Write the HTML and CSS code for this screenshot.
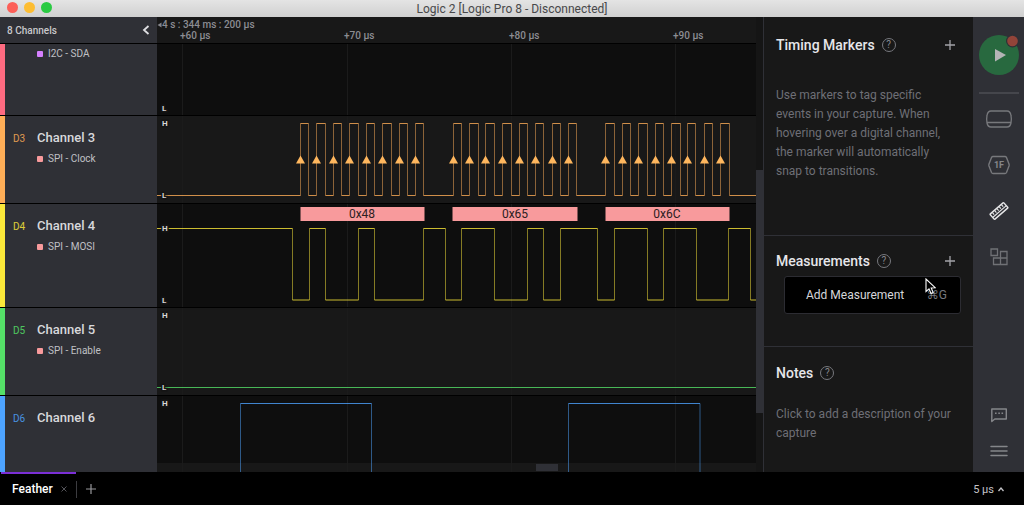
FILE: index.html
```html
<!DOCTYPE html>
<html lang="en">
<head>
<meta charset="utf-8">
<title>Logic 2</title>
<link rel="stylesheet" href="styles.css">
</head>
<body>
<div class="app">
  <header class="titlebar">
    <div class="lights"><i class="light red"></i><i class="light amber"></i><i class="light green"></i></div>
    <div class="title">Logic 2 [Logic Pro 8 - Disconnected]</div>
  </header>

  <main class="workspace">
    <section class="capture">
      <div class="rows">
        <div class="row ruler">
          <div class="channels-head">
            <span>8 Channels</span>
            <button class="icon-btn" aria-label="Collapse channels"><svg width="8" height="10" viewBox="0 0 8 10"><path d="M6.5 1L2 5l4.5 4" fill="none" stroke="#dedee2" stroke-width="1.8"/></svg></button>
          </div>
          <svg class="plot">
            <path d="M4.500 5.500v5l-4-2.500z" fill="#85868c"/>
            <text class="tick" x="5" y="11">4 s : 344 ms : 200 µs</text>
            <text class="tick" x="23" y="22">+60 µs</text>
            <text class="tick" x="187" y="22">+70 µs</text>
            <text class="tick" x="352" y="22">+80 µs</text>
            <text class="tick" x="516" y="22">+90 µs</text>
          </svg>
        </div>

        <div class="row d2 short">
          <div class="channel">
            <div class="analyzer"><i class="swatch violet"></i>I2C - SDA</div>
          </div>
          <svg class="plot">
            <path class="grid" d="M25.500 0v72M190.500 0v72M354.500 0v72M518.500 0v72"/>
            <text class="level" x="5" y="67">L</text>
          </svg>
        </div>

        <div class="row d3 alt">
          <div class="channel">
            <div class="name"><span class="id">D3</span>Channel 3</div>
            <div class="analyzer"><i class="swatch"></i>SPI - Clock</div>
          </div>
          <svg class="plot" id="clock">
            <path class="grid" d="M25.500 0v88M190.500 0v88M354.500 0v88M518.500 0v88"/>
            <path class="edges"/><path class="levels"/>
            <path class="arrows"/>
            <text class="level" x="5" y="10">H</text>
            <text class="level" x="5" y="82">L</text>
          </svg>
        </div>

        <div class="row d4 tall">
          <div class="channel">
            <div class="name"><span class="id">D4</span>Channel 4</div>
            <div class="analyzer"><i class="swatch"></i>SPI - MOSI</div>
          </div>
          <svg class="plot" id="mosi">
            <path class="grid" d="M25.500 0v104M190.500 0v104M354.500 0v104M518.500 0v104"/>
            <rect class="bubble" x="143.500" y="3" width="124" height="14"/>
            <rect class="bubble" x="295.500" y="3" width="125" height="14"/>
            <rect class="bubble" x="448.500" y="3" width="124" height="14"/>
            <text class="byte" x="205" y="14">0x48</text>
            <text class="byte" x="358" y="14">0x65</text>
            <text class="byte" x="510" y="14">0x6C</text>
            <path class="edges"/><path class="levels"/>
            <text class="level" x="5" y="27">H</text>
            <text class="level" x="5" y="99">L</text>
          </svg>
        </div>

        <div class="row d5 alt">
          <div class="channel">
            <div class="name"><span class="id">D5</span>Channel 5</div>
            <div class="analyzer"><i class="swatch"></i>SPI - Enable</div>
          </div>
          <svg class="plot" id="enable">
            <path class="grid" d="M25.500 0v88M190.500 0v88M354.500 0v88M518.500 0v88"/>
            <path class="edges"/><path class="levels"/>
            <text class="level" x="5" y="10">H</text>
            <text class="level" x="5" y="82">L</text>
          </svg>
        </div>

        <div class="row d6 last">
          <div class="channel">
            <div class="name"><span class="id">D6</span>Channel 6</div>
          </div>
          <div class="plot-wrap">
            <div class="hscroll"><i class="hthumb"></i></div>
            <svg class="plot" id="ch6">
              <path class="grid" d="M25.500 0v104M190.500 0v104M354.500 0v104M518.500 0v104"/>
              <path class="edges"/><path class="levels"/>
              <text class="level" x="5" y="10">H</text>
            </svg>
          </div>
        </div>
      </div>
      <div class="vscroll"><i class="vthumb"></i></div>
    </section>

    <aside class="panel">
      <section class="block">
        <div class="block-head">
          <h2>Timing Markers</h2>
          <button class="icon-btn help" aria-label="Help">?</button>
          <button class="icon-btn add" aria-label="Add timing marker"><svg width="10" height="10" viewBox="0 0 10 10"><path d="M5 0v10M0 5h10" stroke="#a3a3a8" stroke-width="1.300"/></svg></button>
        </div>
        <p>Use markers to tag specific events in your capture. When hovering over a digital channel, the marker will automatically snap to transitions.</p>
      </section>
      <section class="block">
        <div class="block-head">
          <h2>Measurements</h2>
          <button class="icon-btn help" aria-label="Help">?</button>
          <button class="icon-btn add" aria-label="Add measurement"><svg width="10" height="10" viewBox="0 0 10 10"><path d="M5 0v10M0 5h10" stroke="#a3a3a8" stroke-width="1.300"/></svg></button>
        </div>
        <button class="menu"><span>Add Measurement</span><kbd>⌘G</kbd></button>
        <svg class="cursor" width="11" height="17" viewBox="0 0 11 17"><path d="M1 1v12.500l3-2.700 2 4.700 2.200-1-2-4.500 4-.3z" fill="#000" stroke="#fff" stroke-width="1.100"/></svg>
      </section>
      <section class="block">
        <div class="block-head">
          <h2>Notes</h2>
          <button class="icon-btn help" aria-label="Help">?</button>
        </div>
        <p>Click to add a description of your capture</p>
      </section>
    </aside>

    <nav class="toolbar">
      <button class="icon-btn" aria-label="Start capture"><svg width="42" height="42" viewBox="0 0 42 42"><circle cx="21" cy="22" r="20" fill="#28693f"/><path d="M17 16v12.500L28 22z" fill="#b4b4b6"/><circle cx="34.500" cy="8" r="6.500" fill="#2f3036"/><circle cx="34.500" cy="8" r="5.300" fill="#924439"/></svg></button>
      <hr>
      <button class="icon-btn tool" aria-label="Device"><svg width="28" height="20" viewBox="0 0 28 20" fill="none" stroke="#77787c" stroke-width="1.300"><path d="M6 2h16c2.500 0 3.500 1.500 4 4.500.5 2.500.5 5 0 7.500-.5 2.500-1.500 4-4 4H6c-2.500 0-3.500-1.500-4-4-.5-2.500-.5-5 0-7.500C2.500 3.500 3.500 2 6 2zM1.700 13.500h24.600"/></svg></button>
      <button class="icon-btn tool" aria-label="Analyzers"><svg width="22" height="20" viewBox="0 0 22 20"><path d="M5 1.500h12q1 0 1.500 1L21 9q.3 1 0 2l-2.500 6.500q-.5 1-1.500 1H5q-1 0-1.500-1L1 11q-.3-1 0-2l2.500-6.500q.5-1 1.500-1z" fill="none" stroke="#77787c" stroke-width="1.400"/><text class="hex" x="11" y="13">1F</text></svg></button>
      <button class="icon-btn tool" aria-label="Measurements"><svg width="20" height="20" viewBox="0 0 20 20"><g transform="rotate(-41 10 10)" fill="none" stroke="#e6e6e8" stroke-width="1.400"><rect x="1" y="6.500" width="18" height="7" rx=".6"/><path d="M1 10.800h18M4 7v2.500M7 7v2.500M10 7v2.500M13 7v2.500M16 7v2.500" stroke-width="1.100"/></g></svg></button>
      <button class="icon-btn tool" aria-label="Extensions"><svg width="20" height="20" viewBox="0 0 20 20" fill="none" stroke="#707176" stroke-width="1.300"><path d="M2 2h6.500v6.500H2zM11.500 11V4.500h6.500v13H4.500V11h13.500M11.500 11v6.500"/></svg></button>
      <span class="spacer"></span>
      <button class="icon-btn tool small" aria-label="Feedback"><svg width="18" height="16" viewBox="0 0 18 16"><path d="M1.800 14.500V2h14.500v10H4.800z" fill="none" stroke="#85868a" stroke-width="1.400" stroke-linejoin="round"/><path d="M5 6.200h1.600M8.300 6.200h1.600M11.500 6.200h1.600" stroke="#85868a" stroke-width="1.500"/></svg></button>
      <button class="icon-btn tool small" aria-label="Menu"><svg width="18" height="12" viewBox="0 0 18 12"><path d="M1 1.500h16M1 6h16M1 10.500h16" stroke="#85868a" stroke-width="1.500" stroke-linecap="round"/></svg></button>
    </nav>
  </main>

  <footer class="tabs">
    <div class="tab"><span>Feather</span><button class="icon-btn" aria-label="Close tab"><svg width="6" height="6" viewBox="0 0 6 6"><path d="M.5.5l5 5M5.500.5l-5 5" stroke="#55555a"/></svg></button></div>
    <button class="icon-btn new-tab" aria-label="New tab"><svg width="10" height="10" viewBox="0 0 10 10"><path d="M5 0v10M0 5h10" stroke="#98989c" stroke-width="1.200"/></svg></button>
    <button class="icon-btn zoom">5 µs<svg width="8" height="6" viewBox="0 0 8 6"><path d="M1.500 5L4 2l2.500 3" fill="none" stroke="#c4c4c8" stroke-width="1.300"/></svg></button>
  </footer>
</div>
<script src="signals.js"></script>
</body>
</html>
```
FILE: styles.css
```css
* { box-sizing: border-box; }
body { margin: 0; background: #000; color: #dcdce0; font-family: Roboto, "Liberation Sans", sans-serif; }
.app { display: flex; flex-direction: column; height: 100vh; min-height: 480px; }
svg { display: block; }
.icon-btn { display: flex; align-items: center; justify-content: center; padding: 0; border: 0; background: none; color: inherit; font: inherit; }

.titlebar { position: relative; flex: none; height: 17px; display: flex; align-items: center; justify-content: center; background: linear-gradient(#e4e4e4, #d0d0d0); color: #48484a; }
.title { font-size: 12px; line-height: 16px; }
.lights { position: absolute; left: 7px; top: 2px; display: flex; gap: 6px; }
.light { width: 11px; height: 11px; border-radius: 50%; }
.red { background: #fc5f58; }
.amber { background: #fdbd32; }
.green { background: #2aca42; }

.workspace { flex: 1; min-height: 0; display: grid; grid-template: minmax(0, 1fr) / minmax(0, 1fr) 210px 51px; }
.capture { display: flex; min-width: 0; background: #181818; }
.rows { flex: 1; min-width: 0; display: flex; flex-direction: column; }
.row { flex: none; height: 88px; display: grid; grid-template: minmax(0, 1fr) / 157px minmax(0, 1fr); border-bottom: 1px solid #000; background: #0e0e0e; }
.row.alt { background: #181818; }
.row.short { height: 72px; }
.row.tall { height: 104px; }
.row.last { flex: 1; height: auto; min-height: 0; border-bottom: 0; overflow: hidden; }
.row.ruler { height: 27px; background: #181818; }
.plot { width: 100%; height: 100%; overflow: hidden; }
.plot-wrap { position: relative; min-height: 0; }
.plot-wrap .plot { position: relative; }

.channels-head { display: flex; align-items: center; justify-content: space-between; padding: 0 7px; background: #2f3036; font-size: 10px; font-weight: 500; color: #c8c8cc; }
.channel { padding: 12px 0 0 32px; border-left: 5px solid var(--color); background: #2f3036; }
.short .channel { padding-top: 2px; }
.name { position: relative; font-size: 13px; line-height: 20px; font-weight: 500; color: #d8d8dc; }
.id { position: absolute; left: -24px; top: 1px; font-size: 10px; font-weight: 400; color: var(--color); opacity: .85; }
.analyzer { display: flex; align-items: center; gap: 5px; margin-top: 3px; font-size: 10px; line-height: 16px; color: #c0c0c5; }
.short .analyzer { margin-top: 0; }
.swatch { width: 6px; height: 6px; border-radius: 1px; background: #f89a9c; }
.violet { background: #d580ff; }
.d2 { --color: #ff6b81; }
.d3 { --color: #ffae57; }
.d4 { --color: #fbe83a; }
.d5 { --color: #55e068; }
.d6 { --color: #4da3ff; }

.tick { font-size: 10px; font-weight: 500; fill: #8c8d93; }
.grid { stroke: #1b1b1b; fill: none; }
.level { font-size: 8px; font-weight: 700; fill: #d6d6d8; stroke: #141414; stroke-width: 3px; paint-order: stroke; }
.edges, .levels { fill: none; stroke: var(--color); stroke-width: 1px; }
.edges { opacity: .5; }
.levels { opacity: .8; }
.arrows { fill: #ffb75e; }
.bubble { fill: #f89a9c; }
.byte { font-size: 12px; text-anchor: middle; fill: #2c2022; }

.hscroll { position: absolute; left: 0; right: 0; bottom: 0; height: 9px; padding: 1px 0; background: #181818; }
.hthumb { display: block; width: 22px; height: 7px; margin-left: 63.300%; background: #2f3036; }
.vscroll { flex: none; width: 7px; padding-top: 153px; background: #151515; }
.vthumb { display: block; height: 243px; background: #2f3036; }

.panel { display: grid; grid-template-rows: 219px 111px minmax(0, 1fr); border-left: 1px solid #2f3036; background: #181818; }
.block { position: relative; min-height: 0; padding: 16px 16px 0 12px; border-bottom: 1px solid #2f3036; }
.block:first-child { padding-top: 18px; }
.block:nth-child(2) { padding-top: 15px; }
.block:last-child { border-bottom: 0; }
.block-head { display: flex; align-items: center; height: 20px; }
h2 { margin: 0; font-size: 14px; line-height: 20px; font-weight: 500; color: #e6e6ea; }
.help { width: 14px; height: 14px; margin-left: 7px; border: 1px solid #77787e; border-radius: 50%; font-size: 10px; line-height: 12px; color: #85868c; }
.add { width: 14px; height: 14px; margin-left: auto; }
p { margin: 31px 0 0; font-size: 12px; line-height: 19px; color: #6e6f76; }
.block:last-child p { margin-top: 22px; }
.menu { position: absolute; left: 20px; right: 12px; top: 40px; height: 38px; display: flex; align-items: center; justify-content: space-between; padding: 0 13px 0 21px; border: 1px solid #2c2c32; border-radius: 3px; background: #000; color: #d6d6da; font-family: inherit; font-size: 12px; }
kbd { font-family: Roboto, "DejaVu Sans", sans-serif; font-size: 12px; color: #77787e; }
.cursor { position: absolute; left: 161px; top: 42px; }

.toolbar { display: flex; flex-direction: column; align-items: center; padding: 16px 0 12px; background: #2f3036; }
.toolbar hr { width: 40px; height: 2px; margin: 17px 0 2px; border: 0; background: #45464c; }
.tool { width: 40px; height: 46px; }
.tool.small { height: 18px; }
.tool.small:last-child { margin-top: 18px; }
.spacer { flex: 1; }
.hex { font-size: 9px; font-weight: 700; text-anchor: middle; fill: #85868a; }

.tabs { flex: none; height: 33px; display: flex; align-items: center; padding-top: 1px; background: #000; }
.tab { position: relative; display: flex; align-items: center; gap: 8px; height: 17px; padding: 0 9px 0 12px; border-right: 1px solid #3c3c40; font-size: 12px; font-weight: 500; color: #fff; }
.tab::before { content: ""; position: absolute; left: 1px; right: 0; top: -9px; height: 2px; background: #7b2fd6; }
.new-tab { width: 28px; height: 28px; }
.zoom { gap: 3px; margin: 0 19px 0 auto; font-size: 11px; color: #c4c4c8; }
```
FILE: signals.js
```javascript
// Each signal lists the x positions where it toggles, in pixels from the plot's left edge.
const EXTENT = 4000;
const clock = [
  143.5, 151.5, 159.5, 168.5, 176.5, 184.5, 192.5, 201.5, 209.5, 217.5, 225.5, 234.5, 242.5, 250.5, 258.5, 266.5,
  296.5, 304.5, 312.5, 321.5, 328.5, 337.5, 345.5, 354.5, 362.5, 370.5, 378.5, 386.5, 395.5, 403.5, 411.5, 419.5,
  448.5, 457.5, 465.5, 473.5, 481.5, 490.5, 498.5, 506.5, 514.5, 523.5, 530.5, 538.5, 547.5, 555.5, 563.5, 572.5
];
const mosi = [135.5, 152.5, 168.5, 201.5, 217.5, 266.5, 288.5, 304.5, 337.5, 370.5, 386.5, 403.5, 440.5,
  457.5, 490.5, 506.5, 539.5, 571.5, 593.5];

function draw(id, toggles, startsHigh, high, low) {
  let x = 0, up = startsHigh, edges = "", levels = "";
  for (const t of [...toggles, EXTENT]) {
    levels += `M${x} ${up ? high : low}H${t}`;
    if (t !== EXTENT) edges += `M${t} ${high}V${low}`;
    x = t;
    up = !up;
  }
  const plot = document.getElementById(id);
  plot.querySelector(".edges").setAttribute("d", edges);
  plot.querySelector(".levels").setAttribute("d", levels);
}

draw("clock", clock, false, 7.5, 79.5);
draw("mosi", mosi, true, 24.5, 96);
draw("enable", [], false, 7.5, 79.5);
draw("ch6", [83.5, 214.5, 411.5, 543], false, 7.5, 79.5);

document.querySelector("#clock .arrows").setAttribute("d",
  clock.filter((_, i) => i % 2 === 0).map(x => `M${x} 39.5l4.5 8h-9z`).join(""));
```
